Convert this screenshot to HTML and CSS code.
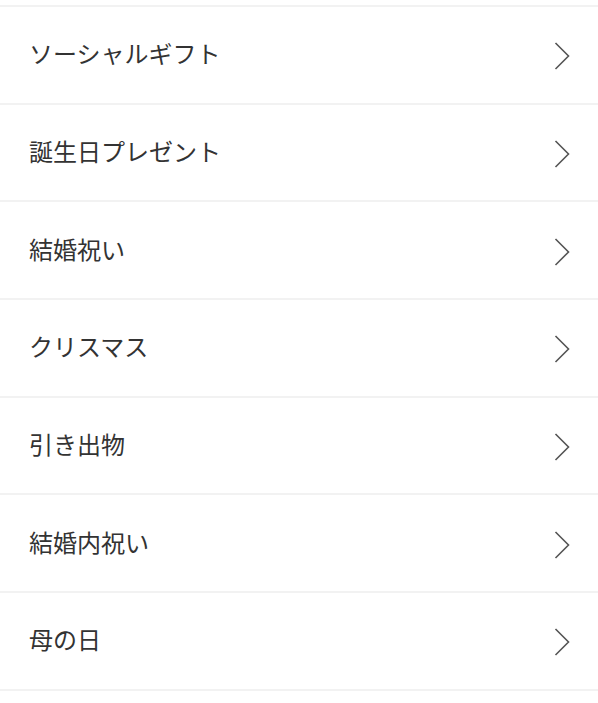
FILE: index.html
```html
<!DOCTYPE html>
<html lang="ja">
<head>
    <meta charset="UTF-8">
    <meta name="viewport" content="width=device-width, initial-scale=1.0">
    <title>ギフト</title>
    <link rel="stylesheet" href="styles.css">
</head>
<body>
    <ul class="menu-list">
        <li class="menu-item"><a href="#"><span class="menu-label">ソーシャルギフト</span><svg class="chevron" viewBox="0 0 16 28"><path d="M1.5 1 L14.5 14 L1.5 27"/></svg></a></li>
        <li class="menu-item"><a href="#"><span class="menu-label">誕生日プレゼント</span><svg class="chevron" viewBox="0 0 16 28"><path d="M1.5 1 L14.5 14 L1.5 27"/></svg></a></li>
        <li class="menu-item"><a href="#"><span class="menu-label">結婚祝い</span><svg class="chevron" viewBox="0 0 16 28"><path d="M1.5 1 L14.5 14 L1.5 27"/></svg></a></li>
        <li class="menu-item"><a href="#"><span class="menu-label">クリスマス</span><svg class="chevron" viewBox="0 0 16 28"><path d="M1.5 1 L14.5 14 L1.5 27"/></svg></a></li>
        <li class="menu-item"><a href="#"><span class="menu-label">引き出物</span><svg class="chevron" viewBox="0 0 16 28"><path d="M1.5 1 L14.5 14 L1.5 27"/></svg></a></li>
        <li class="menu-item"><a href="#"><span class="menu-label">結婚内祝い</span><svg class="chevron" viewBox="0 0 16 28"><path d="M1.5 1 L14.5 14 L1.5 27"/></svg></a></li>
        <li class="menu-item"><a href="#"><span class="menu-label">母の日</span><svg class="chevron" viewBox="0 0 16 28"><path d="M1.5 1 L14.5 14 L1.5 27"/></svg></a></li>
    </ul>
</body>
</html>
```

FILE: styles.css
```css
body {
    font-family: "Noto Sans CJK JP", "Noto Sans", sans-serif;
    background-color: #fff;
    margin: 0;
}

.menu-list {
    list-style: none;
    margin: 5px 0 0;
    padding: 0;
    border-top: 2px solid #f2f2f2;
}

.menu-item {
    border-bottom: 2px solid #f2f2f2;
}

.menu-item a {
    display: flex;
    align-items: center;
    justify-content: space-between;
    height: 95.7px;
    padding: 0 28px 0 29px;
    color: #333;
    text-decoration: none;
}

.menu-label {
    font-size: 24px;
    font-weight: 400;
    margin-top: -4px;
}

.chevron {
    width: 16px;
    height: 28px;
    margin-top: 3px;
    fill: none;
    stroke: #555;
    stroke-width: 1.6;
}
```
